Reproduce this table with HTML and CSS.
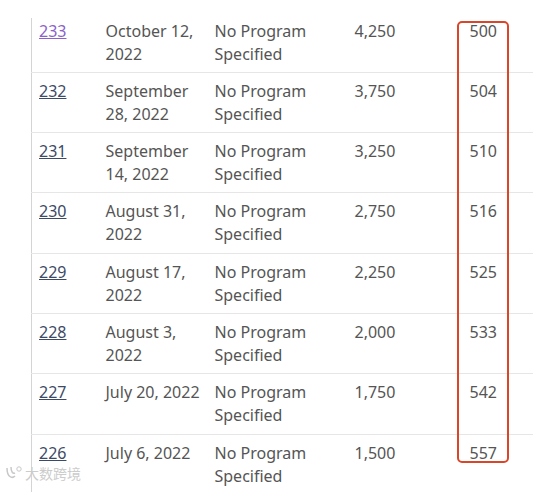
FILE: index.html
```html
<!DOCTYPE html>
<html>
<head>
<meta charset="utf-8">
<link rel="stylesheet" href="styles.css">
</head>
<body>
<div class="page">
  <table class="grid">
    <colgroup>
      <col class="c1"><col class="c2"><col class="c3"><col class="c4"><col class="c5">
    </colgroup>
    <tbody>
      <tr class="first"><td><a class="visited" href="#">233</a></td><td>October 12, 2022</td><td>No Program Specified</td><td>4,250</td><td class="hl">500</td></tr>
      <tr><td><a href="#">232</a></td><td>September 28, 2022</td><td>No Program Specified</td><td>3,750</td><td class="hl">504</td></tr>
      <tr><td><a href="#">231</a></td><td>September 14, 2022</td><td>No Program Specified</td><td>3,250</td><td class="hl">510</td></tr>
      <tr><td><a href="#">230</a></td><td>August 31, 2022</td><td>No Program Specified</td><td>2,750</td><td class="hl">516</td></tr>
      <tr><td><a href="#">229</a></td><td>August 17, 2022</td><td>No Program Specified</td><td>2,250</td><td class="hl">525</td></tr>
      <tr><td><a href="#">228</a></td><td>August 3, 2022</td><td>No Program Specified</td><td>2,000</td><td class="hl">533</td></tr>
      <tr><td><a href="#">227</a></td><td>July 20, 2022</td><td>No Program Specified</td><td>1,750</td><td class="hl">542</td></tr>
      <tr class="last"><td><a href="#">226</a></td><td>July 6, 2022</td><td>No Program Specified</td><td>1,500</td><td class="hl">557</td></tr>
    </tbody>
  </table>
  <div class="highlight"></div>
  <div class="watermark">
    <svg class="wm-icon" width="18" height="16" viewBox="0 0 18 16"><path d="M2 3 C2 12 7 14 10 11 M6 2 C6 7 8 9 10 8" fill="none" stroke="#c8c8c8" stroke-width="1.5"/><circle cx="14" cy="4" r="2.2" fill="none" stroke="#c8c8c8" stroke-width="1"/></svg>
    <span>大数跨境</span>
  </div>
</div>
</body>
</html>
```
FILE: styles.css
```css
html, body {
  margin: 0;
  padding: 0;
  background: #ffffff;
}
.page {
  position: relative;
  width: 533px;
  height: 492px;
  overflow: hidden;
  padding-top: 18px;
  box-sizing: border-box;
}
.grid {
  margin-left: 31px;
  width: 502px;
  border-collapse: collapse;
  table-layout: fixed;
  border-left: 1px solid #d4d4d4;
  font-family: "Noto Sans", "Open Sans", sans-serif;
  font-size: 16px;
  line-height: 23px;
  color: #555555;
}
.c1 { width: 67px; }
.c2 { width: 109px; }
.c3 { width: 140px; }
.c4 { width: 115px; }
.c5 { width: 71px; }
.grid td {
  vertical-align: top;
  padding: 7px 7px 6.3px 7px;
  border-bottom: 1px solid #e6e6e6;
}
.grid tr.first td {
  padding-top: 1.5px;
}
.grid tr.last td {
  border-bottom: none;
}
.grid a {
  color: #3d4a66;
  text-decoration: underline;
}
.grid a.visited {
  color: #8b62c9;
}
.highlight {
  position: absolute;
  left: 457px;
  top: 21px;
  width: 48px;
  height: 438px;
  border: 2px solid #d9472b;
  border-radius: 5px;
}
.watermark {
  position: absolute;
  left: 5px;
  top: 463px;
  display: flex;
  align-items: center;
  gap: 2px;
  font-family: "Noto Sans CJK SC", sans-serif;
  font-size: 14px;
  color: #cccccc;
}
```
